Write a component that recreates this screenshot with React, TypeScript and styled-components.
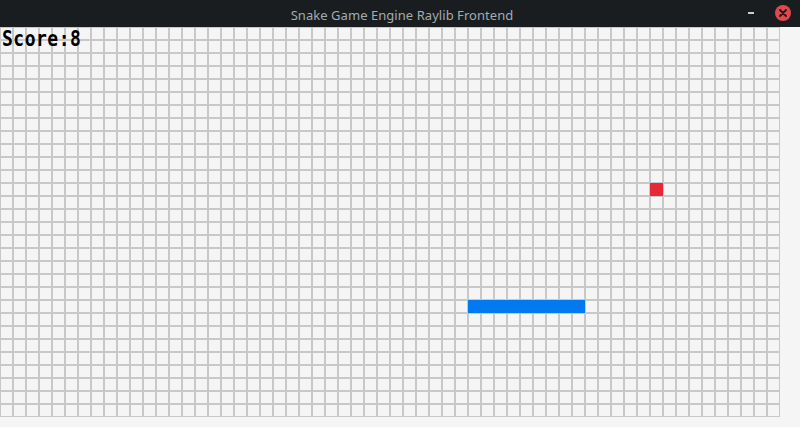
import React from "react";
import styled, { createGlobalStyle } from "styled-components";

const COLS = 60;
const ROWS = 30;
const CELL = 13;

const food = { c: 50, r: 12 };
const snake = Array.from({ length: 9 }, (_, i) => ({ c: 36 + i, r: 21 }));

const GlobalStyle = createGlobalStyle`
  html, body { margin: 0; padding: 0; background: #f5f5f5; overflow: hidden; }
  * { box-sizing: border-box; }
`;

const Window = styled.div`
  width: 800px;
  height: 427px;
  display: flex;
  flex-direction: column;
  background: #f5f5f5;
`;

const TitleBar = styled.div`
  height: 27px;
  flex: 0 0 27px;
  background: #191d20;
  display: grid;
  grid-template-columns: 1fr auto 1fr;
  align-items: center;
`;

const Title = styled.div`
  grid-column: 2;
  font-family: "Noto Sans", "Open Sans", sans-serif;
  font-size: 13px;
  color: #a3abb0;
  letter-spacing: 0.05px;
  padding-top: 2px;
  padding-left: 4px;
`;

const Controls = styled.div`
  grid-column: 3;
  justify-self: end;
  display: flex;
  align-items: center;
  gap: 21px;
  margin-right: 9px;
`;

const MinButton = styled.div`
  width: 6px;
  height: 2px;
  background: #c9ced1;
  margin-top: -2px;
`;

const CloseButton = styled.div`
  width: 16px;
  height: 16px;
  border-radius: 50%;
  background: #e0484f;
  display: flex;
  align-items: center;
  justify-content: center;
  margin-top: -1px;
`;

const Canvas = styled.div`
  position: relative;
  flex: 1;
  background: #f5f5f5;
`;

const Board = styled.div`
  display: grid;
  grid-template-columns: repeat(${COLS}, ${CELL}px);
  grid-template-rows: repeat(${ROWS}, ${CELL}px);
  width: ${COLS * CELL}px;
`;

const Cell = styled.div<{ $fill?: string }>`
  width: ${CELL}px;
  height: ${CELL}px;
  border: 1px solid ${(p) => (p.$fill ? p.$fill : "#c8c8c8")};
  background: ${(p) => p.$fill ?? "#f5f5f5"};
`;

const Score = styled.div`
  position: absolute;
  left: 2px;
  top: 1px;
  font-family: "DejaVu Sans Mono", "Liberation Mono", monospace;
  font-size: 18px;
  font-weight: bold;
  line-height: 20px;
  letter-spacing: 0.5px;
  color: #000;
  transform: scaleY(1.15);
  transform-origin: top left;
`;

export default function App() {
  const snakeSet = new Set(snake.map((s) => `${s.c},${s.r}`));
  const cells: React.ReactNode[] = [];
  for (let r = 0; r < ROWS; r++) {
    for (let c = 0; c < COLS; c++) {
      let fill: string | undefined;
      if (snakeSet.has(`${c},${r}`)) fill = "#0079f1";
      else if (food.c === c && food.r === r) fill = "#e62937";
      cells.push(<Cell key={`${c}-${r}`} $fill={fill} />);
    }
  }
  return (
    <>
      <GlobalStyle />
      <Window>
        <TitleBar>
          <Title>Snake Game Engine Raylib Frontend</Title>
          <Controls>
            <MinButton />
            <CloseButton>
              <svg width="8" height="8" viewBox="0 0 8 8">
                <path d="M1 1 L7 7 M7 1 L1 7" stroke="#2a1416" strokeWidth="1.8" strokeLinecap="round" />
              </svg>
            </CloseButton>
          </Controls>
        </TitleBar>
        <Canvas>
          <Board>{cells}</Board>
          <Score>Score:8</Score>
        </Canvas>
      </Window>
    </>
  );
}
